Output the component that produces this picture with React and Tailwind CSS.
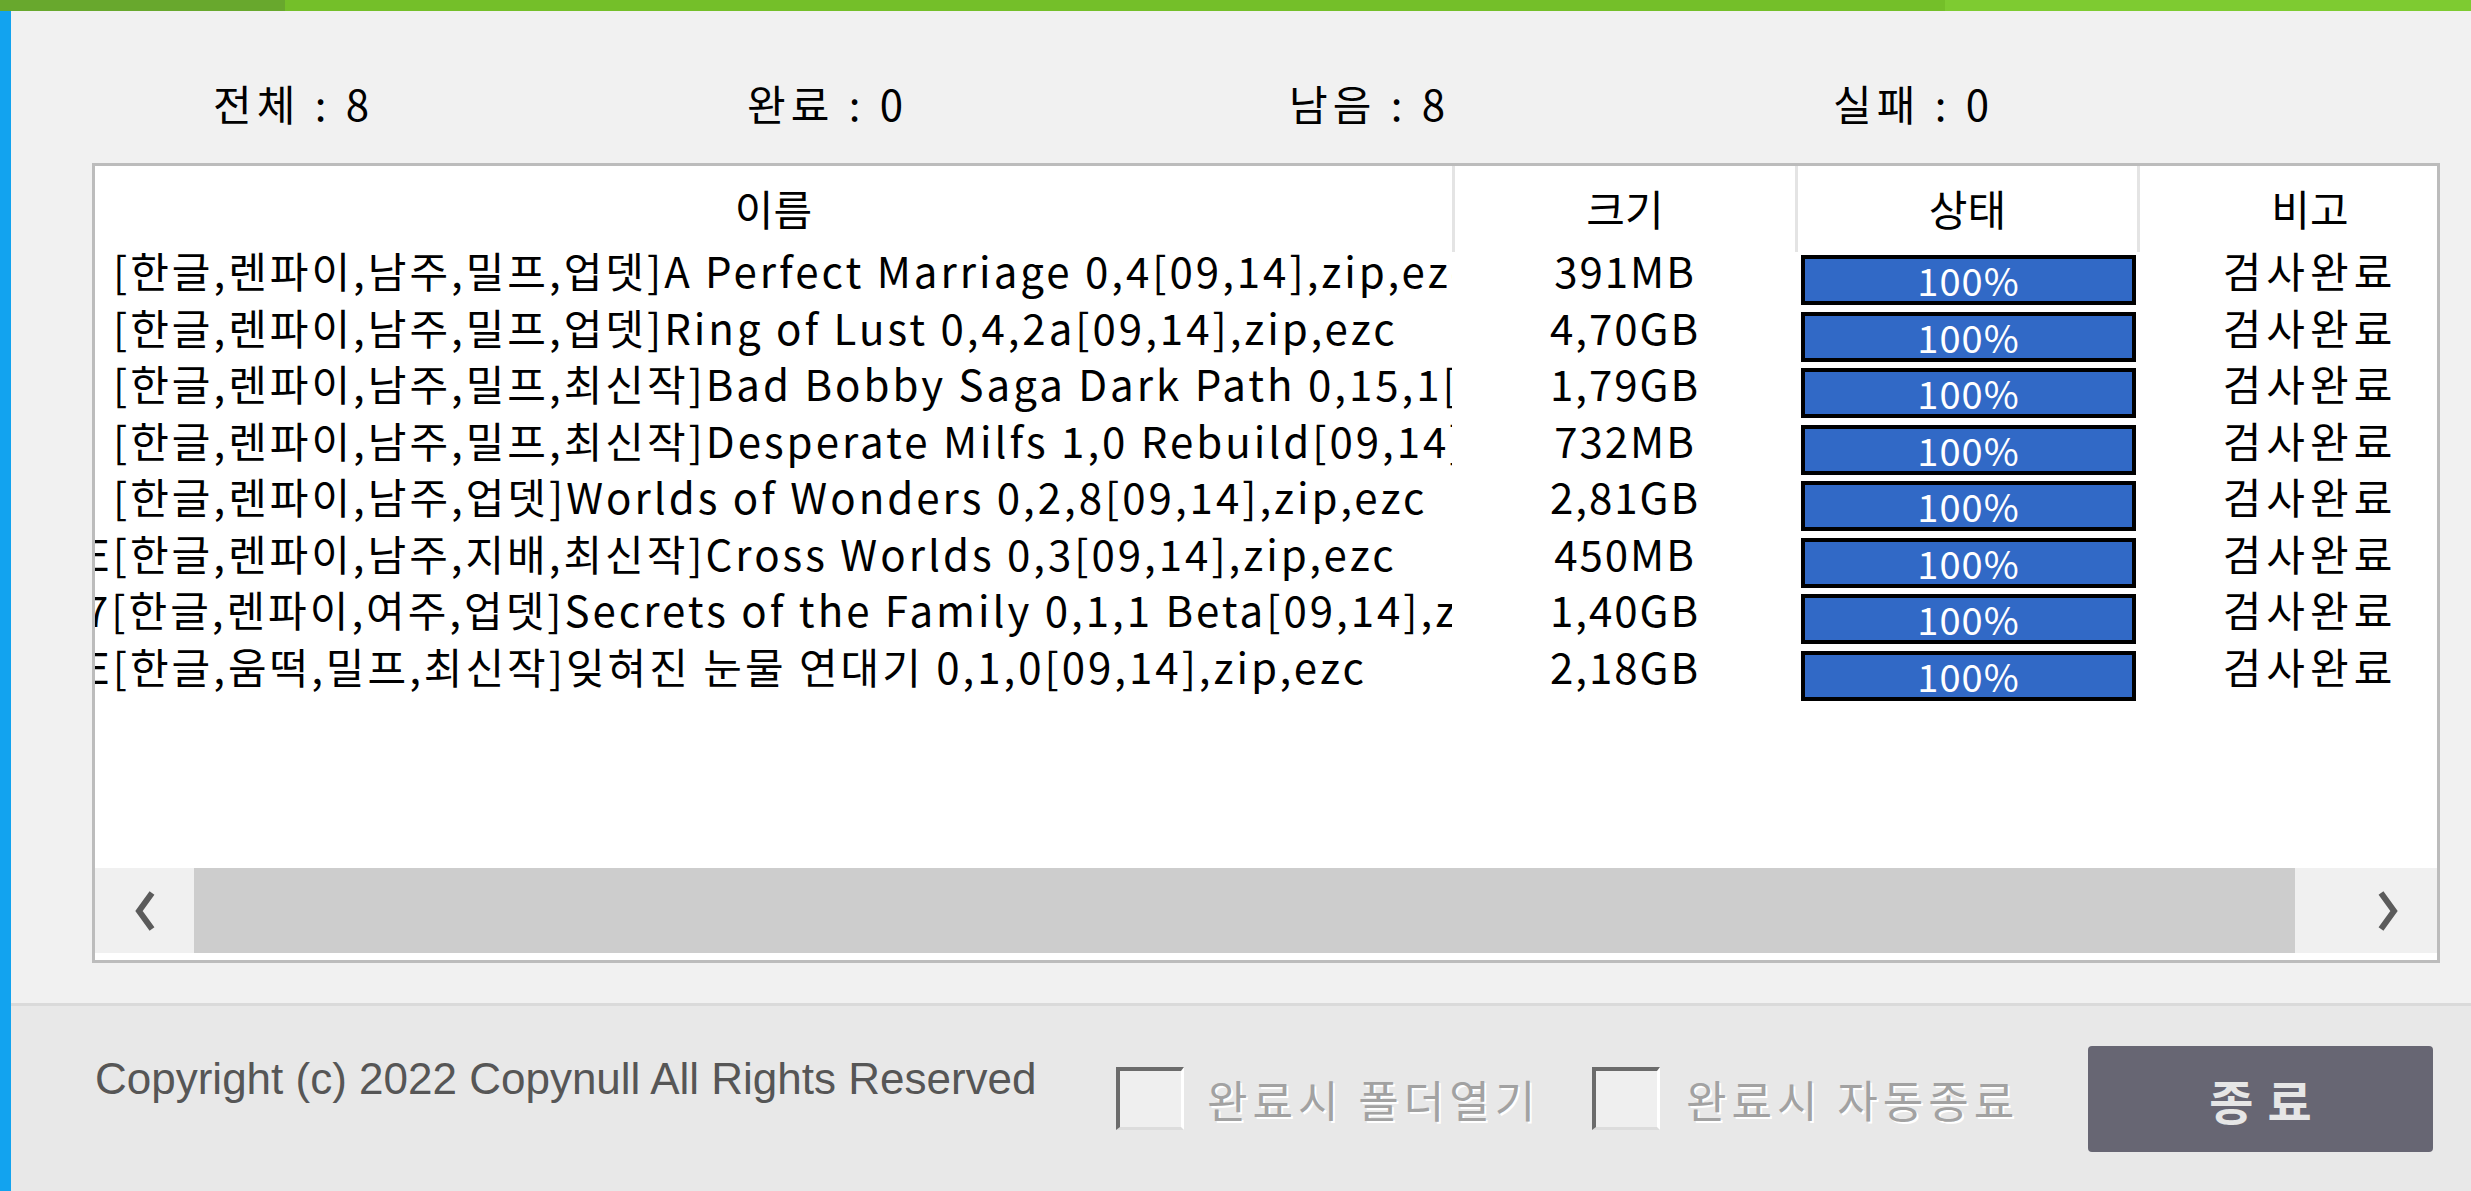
import React from "react";

const rows = [
  { pre: "", name: "[한글,렌파이,남주,밀프,업뎃]A Perfect Marriage 0,4[09,14],zip,ezc", size: "391MB" },
  { pre: "", name: "[한글,렌파이,남주,밀프,업뎃]Ring of Lust 0,4,2a[09,14],zip,ezc", size: "4,70GB" },
  { pre: "", name: "[한글,렌파이,남주,밀프,최신작]Bad Bobby Saga Dark Path 0,15,1[09,14],zip,ezc", size: "1,79GB" },
  { pre: "", name: "[한글,렌파이,남주,밀프,최신작]Desperate Milfs 1,0 Rebuild[09,14],zip,ezc", size: "732MB" },
  { pre: "", name: "[한글,렌파이,남주,업뎃]Worlds of Wonders 0,2,8[09,14],zip,ezc", size: "2,81GB" },
  { pre: "E", name: "[한글,렌파이,남주,지배,최신작]Cross Worlds 0,3[09,14],zip,ezc", size: "450MB" },
  { pre: "7", name: "[한글,렌파이,여주,업뎃]Secrets of the Family 0,1,1 Beta[09,14],zip,ezc", size: "1,40GB" },
  { pre: "E", name: "[한글,움떡,밀프,최신작]잊혀진 눈물 연대기 0,1,0[09,14],zip,ezc", size: "2,18GB" },
];

const stats = [
  ["전체", 8, "w-[534px]"],
  ["완료", 0, "w-[542px]"],
  ["남음", 8, "w-[544px]"],
  ["실패", 0, "w-[400px]"],
];

const Chevron = ({ dir }) => (
  <svg width="30" height="44" viewBox="0 0 30 44">
    <polyline
      points={dir === "left" ? "22,4 9,22 22,40" : "8,4 21,22 8,40"}
      fill="none"
      stroke="#5b5b5b"
      strokeWidth="6"
    />
  </svg>
);

const Checkbox = () => (
  <div className="w-[68px] h-[63px] shrink-0 bg-[#efefef] border-t-[4px] border-l-[4px] border-r-[3px] border-b-[3px] border-t-[#6b6b6b] border-l-[#6b6b6b] border-r-white border-b-[#dcdcdc]"></div>
);

export default function App() {
  return (
    <div className="w-[2471px] h-[1191px] flex flex-col bg-[#f1f1f1] overflow-hidden font-['Noto_Sans_CJK_KR',sans-serif]">
      {/* Title bar strip */}
      <div className="flex h-[11px] shrink-0">
        <div className="w-[285px] bg-[#68a82d]"></div>
        <div className="w-[1660px] bg-[#74bf29]"></div>
        <div className="flex-1 bg-[#7ecb31]"></div>
      </div>

      <div className="flex flex-1">
        {/* Left window edge */}
        <div className="w-[11px] bg-[#12a3ef] shrink-0"></div>

        <div className="flex-1 flex flex-col">
          {/* Top area */}
          <div className="h-[992px] flex flex-col">
            {/* Stats */}
            <div className="flex pl-[202px] pt-[67px] text-[42px] leading-[50px] text-black">
              {stats.map(([label, value, w]) => (
                <div key={label} className={`${w} shrink-0 tracking-[5px] whitespace-pre`}>
                  {label} : {value}
                </div>
              ))}
            </div>

            {/* File list */}
            <div className="ml-[81px] mt-[35px] w-[2348px] h-[800px] border-[3px] border-[#bcbcbc] bg-white flex flex-col overflow-hidden">
              {/* Header */}
              <div className="flex h-[82px] shrink-0 text-[42px] text-black items-center">
                <div className="w-[1357px] shrink-0 h-full flex items-center justify-center">이름</div>
                <div className="w-[343px] shrink-0 h-[86px] self-start border-l-[3px] border-[#e4e4e4] flex items-center justify-center pb-[4px]">크기</div>
                <div className="w-[342px] shrink-0 h-[86px] self-start border-l-[3px] border-[#e4e4e4] flex items-center justify-center pb-[4px]">상태</div>
                <div className="w-[343px] shrink-0 h-[86px] self-start border-l-[3px] border-[#e4e4e4] flex items-center justify-center pb-[4px]">비고</div>
              </div>

              {/* Rows */}
              <div className="flex-1 flex flex-col">
                {rows.map((r, i) => (
                  <div key={i} className="flex h-[56.5px] shrink-0 text-[42px] leading-[44px] text-black">
                    <div className={`w-[1357px] shrink-0 overflow-hidden whitespace-nowrap tracking-[3px] ${r.pre ? "pl-0" : "pl-[18px]"}`}>
                      {r.pre && <span className="inline-block ml-[-10px]">{r.pre}</span>}
                      {r.name}
                    </div>
                    <div className="w-[343px] shrink-0 pl-[3px] text-center tracking-[2px]">{r.size}</div>
                    <div className="w-[342px] shrink-0 pl-[3px]">
                      <div className="ml-[3px] mt-[7px] w-[335px] h-[50px] border-[4px] border-black bg-[#3169c6] text-white text-[38px] leading-[42px] text-center tracking-[1px]">
                        100%
                      </div>
                    </div>
                    <div className="w-[343px] shrink-0 pl-[3px] text-center tracking-[5px]">검사완료</div>
                  </div>
                ))}
              </div>

              {/* Horizontal scrollbar */}
              <div className="flex h-[85px] shrink-0 bg-[#f0f0f0]">
                <div className="w-[99px] flex items-center justify-center">
                  <Chevron dir="left" />
                </div>
                <div className="w-[2101px] bg-[#cdcdcd]"></div>
                <div className="flex-1"></div>
                <div className="w-[99px] flex items-center justify-center">
                  <Chevron dir="right" />
                </div>
              </div>
              <div className="h-[7px] shrink-0 bg-white"></div>
            </div>
          </div>

          {/* Separator */}
          <div className="h-[3px] bg-[#dadada] shrink-0"></div>

          {/* Footer */}
          <div className="flex-1 bg-[#e8e8e8] flex items-center pl-[84px] pr-[38px]">
            <div className="w-[1021px] shrink-0 mb-[40px] font-['Liberation_Sans',Arial,sans-serif] text-[44px] leading-[50px] text-[#565656] whitespace-nowrap">
              Copyright (c) 2022 Copynull All Rights Reserved
            </div>
            <Checkbox />
            <div className="w-[408px] shrink-0 pl-[23px] text-[44px] leading-[52px] tracking-[5px] text-[#a2a2a2] [text-shadow:2px_2px_0_#ffffff] whitespace-nowrap">
              완료시 폴더열기
            </div>
            <Checkbox />
            <div className="pl-[26px] text-[44px] leading-[52px] tracking-[5px] text-[#a2a2a2] [text-shadow:2px_2px_0_#ffffff] whitespace-nowrap">
              완료시 자동종료
            </div>
            <button className="ml-auto w-[345px] h-[106px] bg-[#676673] rounded-[4px] flex items-center justify-center text-[48px] font-bold text-[#e6e6e6] tracking-[14px] pl-[14px]">
              종료
            </button>
          </div>
        </div>
      </div>
    </div>
  );
}
